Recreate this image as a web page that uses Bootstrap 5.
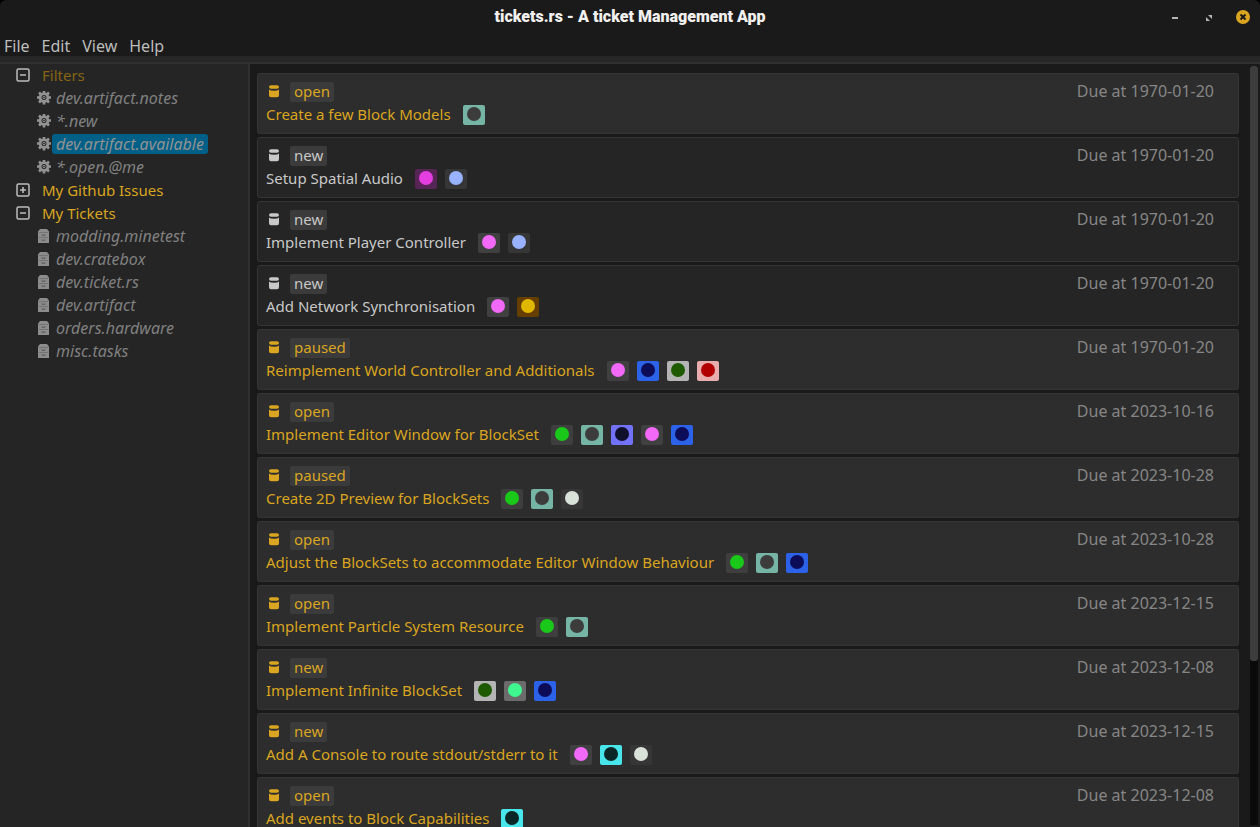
<!DOCTYPE html>
<html lang="en" data-bs-theme="dark">
<head>
<meta charset="utf-8">
<meta name="viewport" content="width=device-width, initial-scale=1">
<title>tickets.rs - A ticket Management App</title>
<link rel="stylesheet" href="https://cdn.jsdelivr.net/npm/bootstrap@5.3.0/dist/css/bootstrap.min.css">
<style>
  body { background: #000; font-family: "Noto Sans", sans-serif; font-size: 16px; line-height: 18px; color: #c8c8c8; }
  a, button { color: inherit; text-decoration: none; }
  .window { background: #1a1a1a; border-radius: 6px 6px 0 0; }
  .titlebar { height: 35px; font: 900 16px/34px Roboto, sans-serif; color: #f2f0ee; }
  .controls { position: absolute; right: 10px; top: 10px; height: 16px; gap: 20px; }
  .controls button, .menu button, .tree button { border: 0; background: none; padding: 0; }
  .controls button { width: 14px; height: 14px; }
  .menu { height: 21px; padding: 2px 4px 1px; gap: 12px; font-size: 16px; color: #bdbdbd; }
  .toolstrip { height: 8px; background: #272727; border-bottom: 2px solid #303030; }
  .sidebar { width: 250px; background: #252525; border-right: 2px solid #303030; }
  .tree li { height: 23px; padding-bottom: 1px; }
  .branch { padding-left: 16px; gap: 12px; color: #daa520; font-size: 15px; }
  .branch.dim { color: #876514; }
  .leaf { padding-left: 37px; gap: 1px; color: #808080; font-style: italic; }
  .leaf a { padding: 1px 4px; border-radius: 3px; }
  .leaf a.active { background: #005f87; color: #929292; }
  .tickets { padding: 9px 11px 0 7px; gap: 3px; }
  .ticket { flex: none; height: 61px; padding: 8px 24px 8px 8px; border: 1px solid #353535; border-radius: 3px; background: #252525; gap: 3px; }
  .ticket.own { background: #2d2d2d; color: #daa520; }
  .ticket h2 { color: inherit; font-size: 15px; line-height: inherit; font-weight: 400; }
  .db { margin: 0 11px 0 3px; width: 10px; height: 20px; fill: currentColor; }
  .state { padding: 0 4px 2px; border-radius: 2px; background: #3b3b3b; font-size: 15px; }
  .due { color: #868686; }
  .tag { width: 22px; height: 20px; border-radius: 2px; padding: 2px 4px; background: var(--b); }
  .tag::before { content: ""; display: block; width: 14px; height: 14px; border-radius: 50%; background: var(--f); }
  .t-teal { --b: #76b5a6; --f: #3c3c3c; } .t-magenta { --b: #562556; --f: #e43ee0; }
  .t-sky { --b: #363636; --f: #98b2ff; } .t-pink { --b: #404040; --f: #f169f6; }
  .t-gold { --b: #653e00; --f: #e0b800; } .t-blue { --b: #2c62e8; --f: #0c0c58; }
  .t-forest { --b: #b4b4b4; --f: #1e5a00; } .t-red { --b: #e9adad; --f: #b00000; }
  .t-green { --b: #3e3e3e; --f: #1ac81a; } .t-violet { --b: #7272f8; --f: #10102c; }
  .t-white { --b: #363636; --f: #d9e2d9; } .t-mint { --b: #6b6b6b; --f: #40f890; }
  .t-cyan { --b: #48e6ea; --f: #0b2626; }
  .scroll-track { width: 8px; margin: 2px 2px 2px 0; background: #0a0a0a; }
  .scroll-thumb { height: 78.4%; border-radius: 3px; background: #3d3d3d; }
</style>
</head>
<body>
<svg class="d-none" xmlns="http://www.w3.org/2000/svg">
  <symbol id="db" viewBox="0 0 10 20"><path d="M0 5Q0 3.500 2 3.200h6q2 .3 2 1.800Q10 6.700 8 6.800H2Q0 6.700 0 5ZM0 7.600q1 1.200 5 1.200t5-1.200v5.600q0 2-2 2H2q-2 0-2-2Z"/></symbol>
  <symbol id="minus" viewBox="0 0 14 14"><rect x="1" y="1" width="12" height="12" rx="1.5" fill="none" stroke="#bcbcbc" stroke-width="1.5"/><path d="M4 7h6" stroke="#bcbcbc" stroke-width="1.6"/></symbol>
  <symbol id="plus" viewBox="0 0 14 14"><rect x="1" y="1" width="12" height="12" rx="1.5" fill="none" stroke="#bcbcbc" stroke-width="1.5"/><path d="M4 7h6M7 4v6" stroke="#bcbcbc" stroke-width="1.6"/></symbol>
  <symbol id="gear" viewBox="0 0 14 14"><g fill="none" stroke="#929292"><circle cx="7" cy="6.500" r="3.900" stroke-width="2.800"/><circle cx="7" cy="6.500" r="1.200" stroke-width="1"/><path d="M7 -.5v2.500M7 11v2.500M0 6.500h2.500M11.500 6.500H14M2 1.500l2 2M10 9.500l2 2M12 1.500l-2 2M4 9.500l-2 2" stroke-width="2.600"/></g></symbol>
  <symbol id="cab" viewBox="0 0 14 14"><path d="M1 2.500L3 0h7l2 2.500V14H1Z" fill="#8c8c8c"/><path d="M2 3.500h9M2 8.500h9" stroke="#737373"/><path d="M5 5.300v1h3v-1M5 10.300v1h3v-1" fill="none" stroke="#5c5c5c"/></symbol>
</svg>
<div class="window d-flex flex-column vh-100 overflow-hidden">
  <header class="titlebar flex-shrink-0 position-relative text-center">
    <span>tickets.rs - A ticket Management App</span>
    <div class="controls d-flex">
      <button type="button" aria-label="Minimize" class="d-flex"><svg width="14" height="14"><path d="M4 8h6" stroke="#b5b5b5" stroke-width="2"/></svg></button>
      <button type="button" aria-label="Maximize" class="d-flex"><svg width="14" height="14" fill="#b5b5b5"><path d="M6 5h4v4ZM4 7v4h4Z"/></svg></button>
      <button type="button" aria-label="Close" class="d-flex"><svg width="14" height="14" viewBox="0 0 14 14"><circle cx="7" cy="7" r="7" fill="#daa520"/><path d="M4.500 4.500l5 5M9.500 4.500l-5 5" stroke="#1a1a1a" stroke-width="2"/></svg></button>
    </div>
  </header>
  <nav class="menu flex-shrink-0 d-flex" aria-label="Application menu">
    <button type="button">File</button><button type="button">Edit</button><button type="button">View</button><button type="button">Help</button>
  </nav>
  <div class="toolstrip flex-shrink-0"></div>
  <div class="d-flex flex-grow-1 overflow-hidden">
    <aside class="sidebar flex-shrink-0">
      <ul class="tree list-unstyled mb-0">
        <li class="branch dim d-flex align-items-center"><svg width="14" height="14"><use href="#minus"/></svg><button type="button">Filters</button></li>
        <li class="leaf d-flex align-items-center"><svg width="14" height="14"><use href="#gear"/></svg><a href="#">dev.artifact.notes</a></li>
        <li class="leaf d-flex align-items-center"><svg width="14" height="14"><use href="#gear"/></svg><a href="#">*.new</a></li>
        <li class="leaf d-flex align-items-center"><svg width="14" height="14"><use href="#gear"/></svg><a href="#" class="active">dev.artifact.available</a></li>
        <li class="leaf d-flex align-items-center"><svg width="14" height="14"><use href="#gear"/></svg><a href="#">*.open.@me</a></li>
        <li class="branch d-flex align-items-center"><svg width="14" height="14"><use href="#plus"/></svg><button type="button">My Github Issues</button></li>
        <li class="branch d-flex align-items-center"><svg width="14" height="14"><use href="#minus"/></svg><button type="button">My Tickets</button></li>
        <li class="leaf d-flex align-items-center"><svg width="14" height="14"><use href="#cab"/></svg><a href="#">modding.minetest</a></li>
        <li class="leaf d-flex align-items-center"><svg width="14" height="14"><use href="#cab"/></svg><a href="#">dev.cratebox</a></li>
        <li class="leaf d-flex align-items-center"><svg width="14" height="14"><use href="#cab"/></svg><a href="#">dev.ticket.rs</a></li>
        <li class="leaf d-flex align-items-center"><svg width="14" height="14"><use href="#cab"/></svg><a href="#">dev.artifact</a></li>
        <li class="leaf d-flex align-items-center"><svg width="14" height="14"><use href="#cab"/></svg><a href="#">orders.hardware</a></li>
        <li class="leaf d-flex align-items-center"><svg width="14" height="14"><use href="#cab"/></svg><a href="#">misc.tasks</a></li>
      </ul>
    </aside>
    <main class="tickets d-flex flex-column flex-grow-1 overflow-hidden">
      <article class="ticket own d-flex flex-column">
        <div class="d-flex"><svg class="db"><use href="#db"/></svg><span class="state">open</span><span class="due ms-auto">Due at 1970-01-20</span></div>
        <div class="d-flex gap-2"><h2 class="mb-0 me-1">Create a few Block Models</h2><span class="tag t-teal"></span></div>
      </article>
      <article class="ticket d-flex flex-column">
        <div class="d-flex"><svg class="db"><use href="#db"/></svg><span class="state">new</span><span class="due ms-auto">Due at 1970-01-20</span></div>
        <div class="d-flex gap-2"><h2 class="mb-0 me-1">Setup Spatial Audio</h2><span class="tag t-magenta"></span><span class="tag t-sky"></span></div>
      </article>
      <article class="ticket d-flex flex-column">
        <div class="d-flex"><svg class="db"><use href="#db"/></svg><span class="state">new</span><span class="due ms-auto">Due at 1970-01-20</span></div>
        <div class="d-flex gap-2"><h2 class="mb-0 me-1">Implement Player Controller</h2><span class="tag t-pink"></span><span class="tag t-sky"></span></div>
      </article>
      <article class="ticket d-flex flex-column">
        <div class="d-flex"><svg class="db"><use href="#db"/></svg><span class="state">new</span><span class="due ms-auto">Due at 1970-01-20</span></div>
        <div class="d-flex gap-2"><h2 class="mb-0 me-1">Add Network Synchronisation</h2><span class="tag t-pink"></span><span class="tag t-gold"></span></div>
      </article>
      <article class="ticket own d-flex flex-column">
        <div class="d-flex"><svg class="db"><use href="#db"/></svg><span class="state">paused</span><span class="due ms-auto">Due at 1970-01-20</span></div>
        <div class="d-flex gap-2"><h2 class="mb-0 me-1">Reimplement World Controller and Additionals</h2><span class="tag t-pink"></span><span class="tag t-blue"></span><span class="tag t-forest"></span><span class="tag t-red"></span></div>
      </article>
      <article class="ticket own d-flex flex-column">
        <div class="d-flex"><svg class="db"><use href="#db"/></svg><span class="state">open</span><span class="due ms-auto">Due at 2023-10-16</span></div>
        <div class="d-flex gap-2"><h2 class="mb-0 me-1">Implement Editor Window for BlockSet</h2><span class="tag t-green"></span><span class="tag t-teal"></span><span class="tag t-violet"></span><span class="tag t-pink"></span><span class="tag t-blue"></span></div>
      </article>
      <article class="ticket own d-flex flex-column">
        <div class="d-flex"><svg class="db"><use href="#db"/></svg><span class="state">paused</span><span class="due ms-auto">Due at 2023-10-28</span></div>
        <div class="d-flex gap-2"><h2 class="mb-0 me-1">Create 2D Preview for BlockSets</h2><span class="tag t-green"></span><span class="tag t-teal"></span><span class="tag t-white"></span></div>
      </article>
      <article class="ticket own d-flex flex-column">
        <div class="d-flex"><svg class="db"><use href="#db"/></svg><span class="state">open</span><span class="due ms-auto">Due at 2023-10-28</span></div>
        <div class="d-flex gap-2"><h2 class="mb-0 me-1">Adjust the BlockSets to accommodate Editor Window Behaviour</h2><span class="tag t-green"></span><span class="tag t-teal"></span><span class="tag t-blue"></span></div>
      </article>
      <article class="ticket own d-flex flex-column">
        <div class="d-flex"><svg class="db"><use href="#db"/></svg><span class="state">open</span><span class="due ms-auto">Due at 2023-12-15</span></div>
        <div class="d-flex gap-2"><h2 class="mb-0 me-1">Implement Particle System Resource</h2><span class="tag t-green"></span><span class="tag t-teal"></span></div>
      </article>
      <article class="ticket own d-flex flex-column">
        <div class="d-flex"><svg class="db"><use href="#db"/></svg><span class="state">new</span><span class="due ms-auto">Due at 2023-12-08</span></div>
        <div class="d-flex gap-2"><h2 class="mb-0 me-1">Implement Infinite BlockSet</h2><span class="tag t-forest"></span><span class="tag t-mint"></span><span class="tag t-blue"></span></div>
      </article>
      <article class="ticket own d-flex flex-column">
        <div class="d-flex"><svg class="db"><use href="#db"/></svg><span class="state">new</span><span class="due ms-auto">Due at 2023-12-15</span></div>
        <div class="d-flex gap-2"><h2 class="mb-0 me-1">Add A Console to route stdout/stderr to it</h2><span class="tag t-pink"></span><span class="tag t-cyan"></span><span class="tag t-white"></span></div>
      </article>
      <article class="ticket own d-flex flex-column">
        <div class="d-flex"><svg class="db"><use href="#db"/></svg><span class="state">open</span><span class="due ms-auto">Due at 2023-12-08</span></div>
        <div class="d-flex gap-2"><h2 class="mb-0 me-1">Add events to Block Capabilities</h2><span class="tag t-cyan"></span></div>
      </article>
    </main>
    <div class="scroll-track flex-shrink-0"><div class="scroll-thumb"></div></div>
  </div>
</div>
<script src="https://cdn.jsdelivr.net/npm/bootstrap@5.3.0/dist/js/bootstrap.bundle.min.js"></script>
</body>
</html>
